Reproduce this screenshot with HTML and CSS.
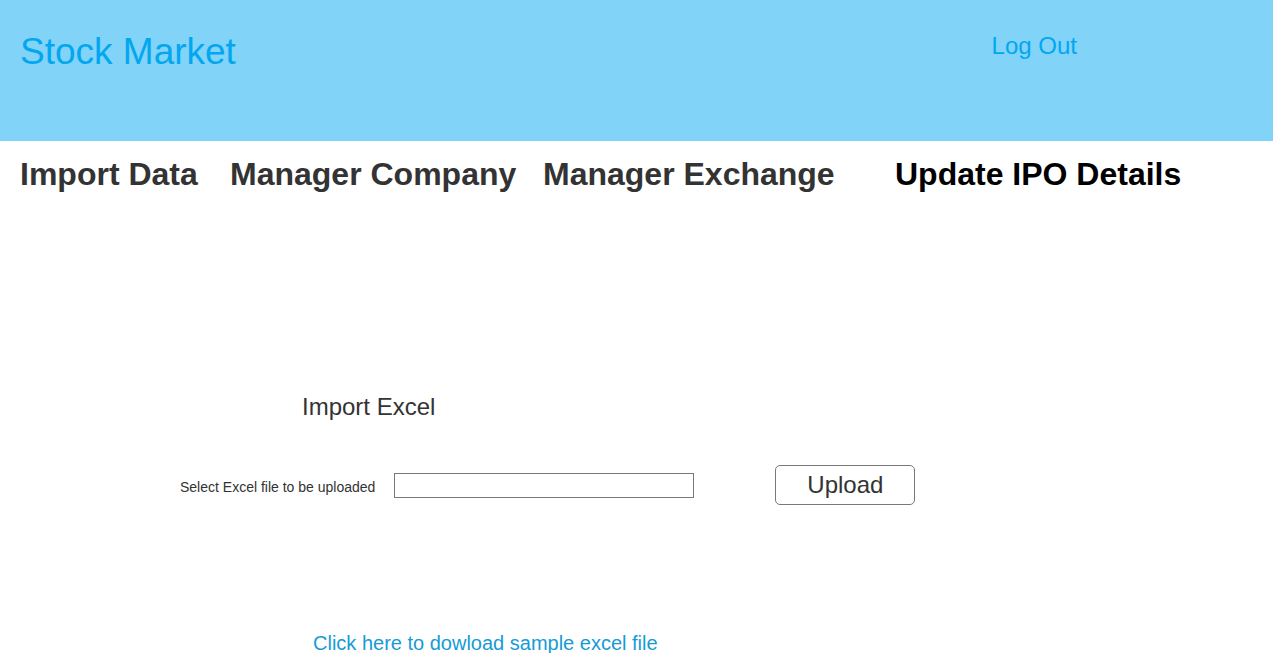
FILE: index.html
```html
<!DOCTYPE html>
<html lang="en">
<head>
<meta charset="utf-8">
<title>Stock Market</title>
<link rel="stylesheet" href="styles.css">
</head>
<body>
<header class="topbar">
  <div class="brand">Stock Market</div>
  <a class="logout" href="#">Log Out</a>
</header>
<nav class="tabs">
  <a class="tab" href="#">Import Data</a>
  <a class="tab" href="#">Manager Company</a>
  <a class="tab" href="#">Manager Exchange</a>
  <a class="tab tab-active" href="#">Update IPO Details</a>
</nav>
<main class="import">
  <h2 class="import-title">Import Excel</h2>
  <div class="upload-row">
    <label class="upload-label" for="file">Select Excel file to be uploaded</label>
    <input class="upload-input" id="file" type="text">
    <button class="upload-btn" type="button">Upload</button>
  </div>
  <a class="sample-link" href="#">Click here to dowload sample excel file</a>
</main>
</body>
</html>
```
FILE: styles.css
```css
html, body {
  margin: 0;
  padding: 0;
  background: #ffffff;
  font-family: "Liberation Sans", Arial, sans-serif;
}

.topbar {
  display: flex;
  align-items: flex-start;
  height: 141px;
  background: #81d3f8;
  box-sizing: border-box;
}

.brand {
  margin: 33px 0 0 20px;
  font-size: 37px;
  line-height: 1;
  color: #02a7f0;
}

.logout {
  margin: 34px 196px 0 auto;
  font-size: 24px;
  line-height: 1;
  color: #02a7f0;
  text-decoration: none;
}

.tabs {
  display: grid;
  grid-template-columns: 210px 313px 352px auto;
  padding: 17px 0 0 20px;
}

.tab {
  font-size: 32px;
  font-weight: bold;
  line-height: 1;
  color: #333333;
  text-decoration: none;
  white-space: nowrap;
}

.tab-active {
  color: #000000;
}

.import {
  padding-top: 205px;
}

.import-title {
  margin: 0 0 0 302px;
  font-size: 24px;
  font-weight: normal;
  line-height: 1;
  color: #333333;
}

.upload-row {
  display: flex;
  align-items: center;
  height: 40px;
  margin-top: 46px;
  padding-left: 180px;
}

.upload-label {
  padding-top: 4px;
  font-size: 14px;
  line-height: 1;
  color: #333333;
  white-space: nowrap;
}

.upload-input {
  width: 300px;
  height: 25px;
  margin: 0 0 0 19px;
  padding: 0;
  box-sizing: border-box;
  border: 1px solid #797979;
  background: #ffffff;
}

.upload-btn {
  width: 140px;
  height: 40px;
  margin-left: 81px;
  padding: 0;
  box-sizing: border-box;
  border: 1px solid #797979;
  border-radius: 5px;
  background: #ffffff;
  font-family: "Liberation Sans", Arial, sans-serif;
  font-size: 24px;
  color: #333333;
}

.sample-link {
  display: block;
  margin: 128px 0 0 313px;
  font-size: 20px;
  line-height: 1;
  color: #169bd5;
  text-decoration: none;
}
```
